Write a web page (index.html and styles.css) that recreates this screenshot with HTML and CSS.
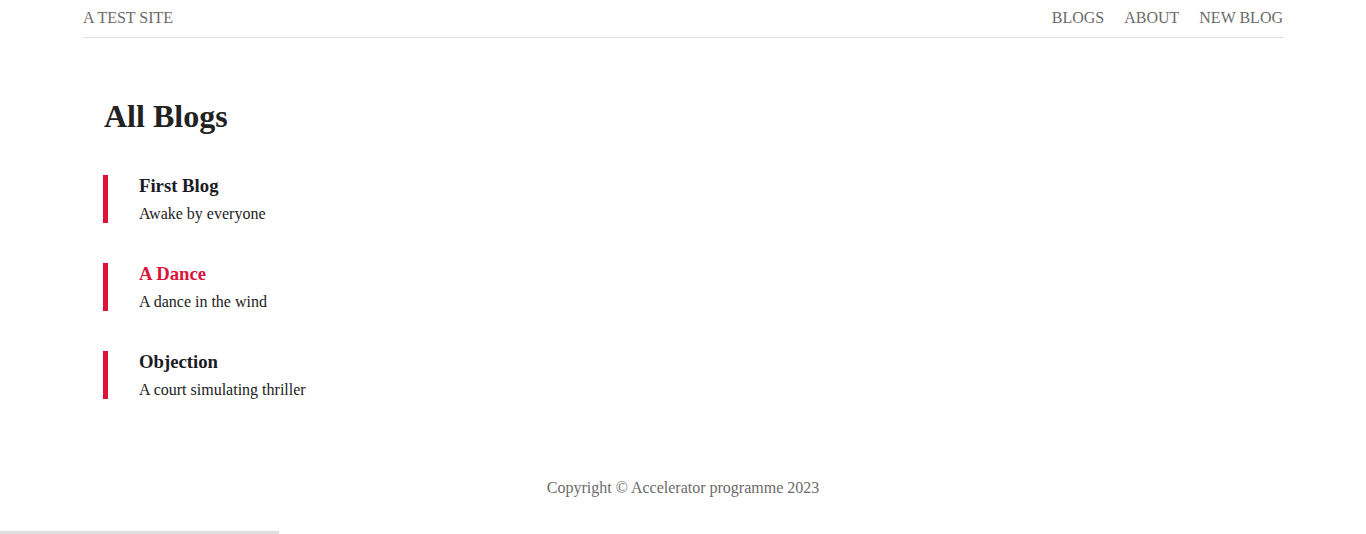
FILE: index.html
```html
<!DOCTYPE html>
<html lang="en">
<head>
<meta charset="utf-8">
<title>A Test Site</title>
<link rel="stylesheet" href="styles.css">
</head>
<body>
<div class="page">
  <nav class="navbar">
    <a class="brand" href="#">A TEST SITE</a>
    <div class="links">
      <a href="#">BLOGS</a>
      <a href="#">ABOUT</a>
      <a href="#">NEW BLOG</a>
    </div>
  </nav>
  <main class="content">
    <h1 class="title">All Blogs</h1>
    <div class="blog-list">
      <div class="blog-preview">
        <h3 class="blog-title">First Blog</h3>
        <p class="blog-snippet">Awake by everyone</p>
      </div>
      <div class="blog-preview">
        <h3 class="blog-title active">A Dance</h3>
        <p class="blog-snippet">A dance in the wind</p>
      </div>
      <div class="blog-preview">
        <h3 class="blog-title">Objection</h3>
        <p class="blog-snippet">A court simulating thriller</p>
      </div>
    </div>
  </main>
  <footer class="footer">Copyright © Accelerator programme 2023</footer>
</div>
<div class="scroll-thumb"></div>
</body>
</html>
```

FILE: styles.css
```css
* {
  box-sizing: border-box;
}

html, body {
  margin: 0;
  padding: 0;
  background: #ffffff;
}

body {
  font-family: "Liberation Serif", "Times New Roman", serif;
  color: #222222;
  overflow: hidden;
}

.page {
  width: 1200px;
  margin: 0 auto;
}

.navbar {
  display: flex;
  justify-content: space-between;
  align-items: center;
  padding: 9px 0 10px;
  border-bottom: 1px solid #dddddd;
  font-size: 16px;
}

.navbar a {
  color: #6b6b6b;
  text-decoration: none;
}

.links {
  display: flex;
  gap: 20px;
}

.content {
  padding: 60px 20px 0;
}

.title {
  margin: 0 0 0 1px;
  font-size: 32px;
  font-weight: bold;
  color: #222222;
}

.blog-list {
  display: flex;
  flex-direction: column;
  gap: 40px;
  margin-top: 40px;
}

.blog-preview {
  border-left: 5px solid #dc143c;
  padding-left: 31px;
}

.blog-title {
  margin: 0;
  font-size: 18.72px;
  font-weight: bold;
  color: #1b1b24;
}

.blog-title.active {
  color: #dc143c;
}

.blog-snippet {
  margin: 8px 0 0;
  font-size: 16px;
  color: #222222;
}

.footer {
  margin-top: 80px;
  text-align: center;
  font-size: 16px;
  color: #6b6b6b;
}

.scroll-thumb {
  position: fixed;
  left: 0;
  bottom: 0;
  width: 279px;
  height: 3px;
  background: #dedede;
}
```
